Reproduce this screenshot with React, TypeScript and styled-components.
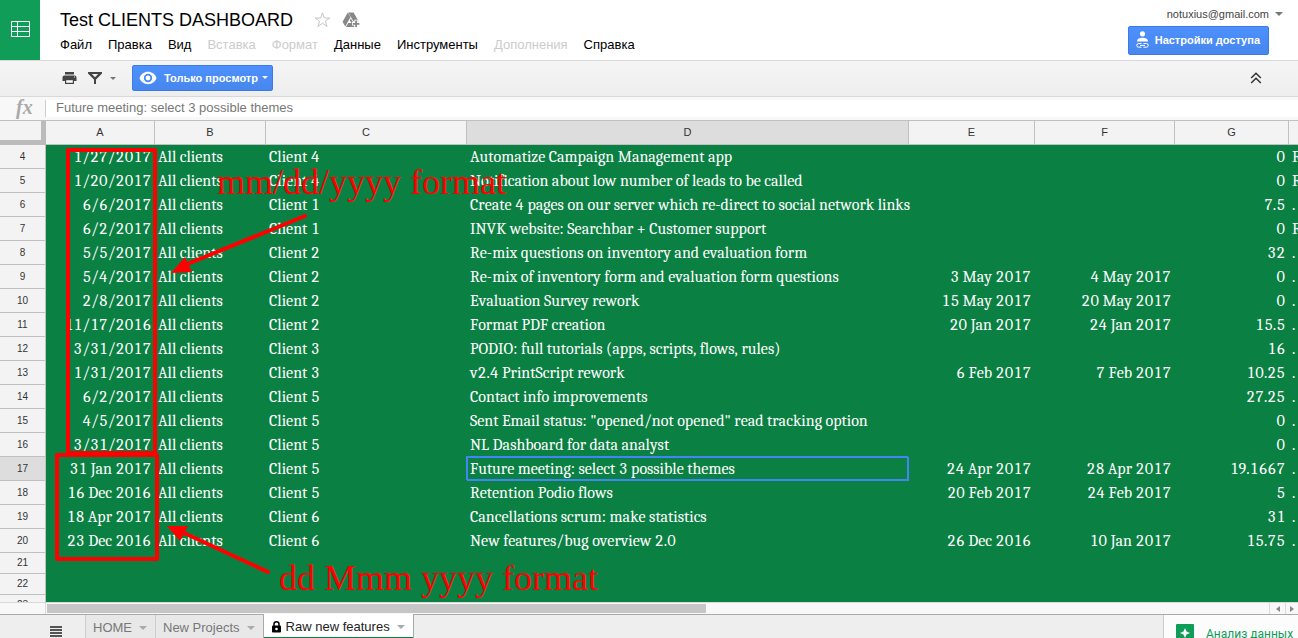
import React from "react";
import styled, { createGlobalStyle } from "styled-components";

const GlobalStyle = createGlobalStyle`
  *, *::before, *::after { box-sizing: border-box; }
  body {
    margin: 0;
    overflow: hidden;
    background: #fff;
    font-family: "Liberation Sans", Arial, sans-serif;
    color: #000;
  }
  button { font-family: inherit; cursor: pointer; }
`;

const Page = styled.div`
  display: flex;
  flex-direction: column;
  height: 100vh;
  min-height: 400px;
`;

const Header = styled.header`
  display: flex;
  flex: none;
  height: 61px;
  border-bottom: 1px solid #d9d9d9;
`;

const HomeLink = styled.a`
  display: flex;
  flex: none;
  width: 40px;
  height: 60px;
  align-items: center;
  justify-content: center;
  background: #0f9d58;
`;

const HeaderMain = styled.div`
  flex: 1;
  min-width: 0;
  padding: 8px 0 0 20px;
`;

const TitleRow = styled.div`
  display: flex;
  align-items: center;
  height: 24px;
`;

const Title = styled.h1`
  margin: 0 20px 0 0;
  font-size: 18px;
  line-height: 24px;
  font-weight: 400;
  white-space: nowrap;
`;

const IconButton = styled.button`
  display: flex;
  align-items: center;
  justify-content: center;
  padding: 0;
  border: 0;
  background: none;
`;

const TitleIcon = styled(IconButton)`
  width: 20px;
  height: 24px;
  margin-right: 8px;
`;

const Menu = styled.nav`
  display: flex;
  gap: 16px;
  padding-top: 5px;
`;

const MenuItem = styled.button`
  padding: 0;
  border: 0;
  background: none;
  font-size: 13px;
  line-height: 16px;
  color: #000;
  white-space: nowrap;
  &:disabled { color: #ccc; cursor: default; }
`;

const Account = styled.div`
  display: flex;
  flex-direction: column;
  align-items: flex-end;
  gap: 5px;
  padding: 7px 0 0;
`;

const AccountButton = styled.button`
  display: flex;
  align-items: center;
  gap: 6px;
  padding: 0;
  margin-right: 15px;
  border: 0;
  background: none;
  font-size: 11px;
  line-height: 14px;
  color: #444;
`;

const BlueButton = styled.button`
  display: flex;
  align-items: center;
  border: 1px solid #3b7be8;
  border-radius: 2px;
  background: linear-gradient(#4d90fe, #4787ed);
  color: #fff;
  font-size: 11px;
  line-height: 14px;
  font-weight: 700;
  white-space: nowrap;
`;

const ShareButton = styled(BlueButton)`
  height: 29px;
  margin-right: 29px;
  padding: 0 8px 2px 7px;
  gap: 6px;
`;

const ViewOnlyButton = styled(BlueButton)`
  height: 26px;
  margin-left: 16px;
  padding: 0 4px 1px 6px;
  gap: 7px;
`;

const Caret = styled.span<{ $size?: number; $color?: string }>`
  flex: none;
  width: 0;
  height: 0;
  border: ${(p) => p.$size ?? 4}px solid transparent;
  border-top-color: ${(p) => p.$color ?? "#777"};
  border-bottom: 0;
`;

const ButtonLabel = styled.span`
  display: flex;
  align-items: center;
  gap: 4px;
`;

const Toolbar = styled.div`
  display: flex;
  flex: none;
  align-items: center;
  height: 36px;
  padding: 0 36px 1px 62px;
  border-bottom: 1px solid #d9d9d9;
  background: linear-gradient(#f5f5f5, #eee);
`;

const ToolButton = styled(IconButton)`
  gap: 7px;
  margin-right: 10px;
  &:nth-child(2) { margin-right: 0; }
`;

const CollapseButton = styled(IconButton)`
  margin-left: auto;
`;

const FormulaBar = styled.div`
  display: flex;
  flex: none;
  align-items: center;
  height: 23px;
  background: #f8f8f8;
`;

const FormulaLabel = styled.label`
  flex: none;
  width: 46px;
  height: 17px;
  padding-left: 16px;
  border-right: 1px solid #ccc;
  font: italic 700 20px/15px "Liberation Serif", serif;
  color: #aaa;
`;

const FormulaInput = styled.input`
  flex: 1;
  min-width: 0;
  height: 17px;
  padding: 0 10px 2px;
  border: 0;
  outline: 0;
  background: #fff;
  font: 13px/15px "Liberation Sans", Arial, sans-serif;
  color: #777;
`;

const Sheet = styled.main`
  position: relative;
  flex: 1;
  min-height: 0;
  overflow: hidden;
  border-top: 1px solid #c0c0c0;
  background: #0b8043;
`;

const Grid = styled.table`
  width: 100%;
  table-layout: fixed;
  border-collapse: separate;
  border-spacing: 0;
`;

const Col = styled.col<{ $w?: number }>`
  width: ${(p) => (p.$w ? `${p.$w}px` : "auto")};
`;

const Corner = styled.td`
  height: 24px;
  padding: 0;
  border: solid #bbb;
  border-width: 0 5px 5px 0;
  background: #f3f3f3;
`;

const ColHead = styled.th<{ $active?: boolean }>`
  height: 24px;
  padding: 0 0 2px;
  border: solid #c0c0c0;
  border-width: 0 1px 1px 0;
  background: ${(p) => (p.$active ? "#ddd" : "#f3f3f3")};
  font-size: 11px;
  line-height: 14px;
  font-weight: 400;
  color: #333;
  &:last-child { border-right: 0; }
`;

const RowHead = styled(ColHead)<{ $short?: boolean }>`
  height: ${(p) => (p.$short ? 21 : 24)}px;
  padding: 0;
  font-size: 10px;
`;

const Cell = styled.td<{ $right?: boolean; $active?: boolean }>`
  padding: 0 4px 0 3px;
  box-shadow: ${(p) =>
    p.$active ? "-1px -1px #4285f4, inset 1px 1px #4285f4, inset -2px -2px #4285f4" : "none"};
  font-family: Cambria, Caladea, "Liberation Serif", serif;
  font-size: 16px;
  font-kerning: none;
  font-variant-numeric: lining-nums tabular-nums;
  line-height: 20px;
  color: #fff;
  text-align: ${(p) => (p.$right ? "right" : "left")};
  white-space: nowrap;
`;

const Annotations = styled.svg`
  position: absolute;
  top: 0;
  left: 0;
  width: 640px;
  height: 480px;
  pointer-events: none;
`;

const Note = styled.span<{ $x: number; $y: number }>`
  position: absolute;
  left: ${(p) => p.$x}px;
  top: ${(p) => p.$y}px;
  font: 36px/40px "Liberation Serif", serif;
  color: #f00;
  white-space: nowrap;
  pointer-events: none;
`;

const ScrollBar = styled.div`
  display: flex;
  flex: none;
  height: 12px;
  border-top: 1px solid #d9d9d9;
  background: #f8f8f8;
`;

const ScrollGutter = styled.div`
  flex: none;
  width: 46px;
  border-right: 1px solid #d9d9d9;
`;

const ScrollTrack = styled.div`
  flex: 1;
  padding: 1px;
`;

const ScrollThumb = styled.div`
  width: 54%;
  height: 9px;
  background: #c6c6c6;
`;

const ScrollArrow = styled(IconButton)`
  width: 16px;
  border-left: 1px solid #d9d9d9;
  &:last-child { width: 13px; }
`;

const BottomBar = styled.footer`
  display: flex;
  flex: none;
  align-items: stretch;
  height: 24px;
  border-top: 1px solid #aaa;
  background: #eee;
`;

const SheetList = styled(IconButton)`
  width: 85px;
  padding: 10px 0 0 27px;
`;

const Tab = styled.button<{ $active?: boolean }>`
  display: flex;
  align-items: center;
  gap: 7px;
  padding: 2px 8px 0 7px;
  margin-top: ${(p) => (p.$active ? -1 : 0)}px;
  border: solid ${(p) => (p.$active ? "#aaa" : "#ccc")};
  border-width: 0 ${(p) => (p.$active ? 1 : 0)}px 0 1px;
  background: ${(p) => (p.$active ? "#fff" : "#e8e8e8")};
  box-shadow: ${(p) => (p.$active ? "inset 0 -1px #0b8043" : "none")};
  font-size: 13px;
  line-height: 16px;
  color: ${(p) => (p.$active ? "#222" : "#777")};
  white-space: nowrap;
`;

const TabLabel = styled.span`
  display: flex;
  align-items: center;
  gap: 4px;
`;

const Explore = styled.button`
  display: flex;
  align-items: flex-start;
  gap: 12px;
  width: 135px;
  margin-left: auto;
  padding: 9px 0 0 12px;
  border: 0;
  border-left: 1px solid #ccc;
  background: #fcfcfc;
  overflow: hidden;
  color: #0f9d58;
  white-space: nowrap;
`;

const ExploreLabel = styled.span`
  font: 12px/20px Roboto, "Liberation Sans", sans-serif;
`;

const menus: { label: string; disabled?: boolean }[] = [
  { label: "Файл" },
  { label: "Правка" },
  { label: "Вид" },
  { label: "Вставка", disabled: true },
  { label: "Формат", disabled: true },
  { label: "Данные" },
  { label: "Инструменты" },
  { label: "Дополнения", disabled: true },
  { label: "Справка" },
];

const columns: { name: string; width?: number }[] = [
  { name: "A", width: 109 },
  { name: "B", width: 111 },
  { name: "C", width: 201 },
  { name: "D", width: 442 },
  { name: "E", width: 126 },
  { name: "F", width: 140 },
  { name: "G", width: 114 },
  { name: "" },
];

const rows: string[][] = [
  ["1/27/2017", "All clients", "Client 4", "Automatize Campaign Management app", "", "", "0", "R"],
  ["1/20/2017", "All clients", "Client 4", "Notification about low number of leads to be called", "", "", "0", "R"],
  ["6/6/2017", "All clients", "Client 1", "Create 4 pages on our server which re-direct to social network links", "", "", "7.5", "."],
  ["6/2/2017", "All clients", "Client 1", "INVK website: Searchbar + Customer support", "", "", "0", "R"],
  ["5/5/2017", "All clients", "Client 2", "Re-mix questions on inventory and evaluation form", "", "", "32", "."],
  ["5/4/2017", "All clients", "Client 2", "Re-mix of inventory form and evaluation form questions", "3 May 2017", "4 May 2017", "0", "."],
  ["2/8/2017", "All clients", "Client 2", "Evaluation Survey rework", "15 May 2017", "20 May 2017", "0", "."],
  ["11/17/2016", "All clients", "Client 2", "Format PDF creation", "20 Jan 2017", "24 Jan 2017", "15.5", "."],
  ["3/31/2017", "All clients", "Client 3", "PODIO: full tutorials (apps, scripts, flows, rules)", "", "", "16", "."],
  ["1/31/2017", "All clients", "Client 3", "v2.4 PrintScript rework", "6 Feb 2017", "7 Feb 2017", "10.25", "."],
  ["6/2/2017", "All clients", "Client 5", "Contact info improvements", "", "", "27.25", "."],
  ["4/5/2017", "All clients", "Client 5", 'Sent Email status: "opened/not opened" read tracking option', "", "", "0", "."],
  ["3/31/2017", "All clients", "Client 5", "NL Dashboard for data analyst", "", "", "0", "."],
  ["31 Jan 2017", "All clients", "Client 5", "Future meeting: select 3 possible themes", "24 Apr 2017", "28 Apr 2017", "19.1667", "."],
  ["16 Dec 2016", "All clients", "Client 5", "Retention Podio flows", "20 Feb 2017", "24 Feb 2017", "5", "."],
  ["18 Apr 2017", "All clients", "Client 6", "Cancellations scrum: make statistics", "", "", "31", "."],
  ["23 Dec 2016", "All clients", "Client 6", "New features/bug overview 2.0", "26 Dec 2016", "10 Jan 2017", "15.75", "."],
  [],
  [],
  [],
];

const FIRST_ROW = 4;
const ACTIVE_ROW = 17;
const ACTIVE_COL = 3;
const isRight = (c: number) => c === 0 || (c >= 4 && c <= 6);

export default function App() {
  return (
    <Page>
      <GlobalStyle />
      <Header>
        <HomeLink href="#" aria-label="Sheets home">
          <svg width="20" height="18" viewBox="0 0 20 18" fill="none" stroke="#fff">
            <path d="M1.5 .5h18v15h-18zM1.5 5.5h18M1.5 10.5h18M7.5 .5v15" />
          </svg>
        </HomeLink>
        <HeaderMain>
          <TitleRow>
            <Title>Test CLIENTS DASHBOARD</Title>
            <TitleIcon aria-label="Star">
              <svg width="17" height="18" viewBox="0 0 17 18" fill="none" stroke="#c4c4c4">
                <path d="M7.500 1.800l1.800 5.200h5.500l-4.400 3.200 1.700 5.300-4.600-3.300-4.600 3.300 1.700-5.300L.2 7h5.500z" />
              </svg>
            </TitleIcon>
            <TitleIcon aria-label="Add to Drive">
              <svg width="18" height="16" viewBox="0 0 18 16" fill="#888">
                <path d="M5.800 .4L.6 9.800l2.600 4.800L8.600 5z" />
                <path d="M6.200 .4h5.400l5 8.800H11.400z" />
                <path d="M8.800 6.500l2.600 4.300 1 4.200H3.900l2.300-4h3.300L7.800 8.200z" />
                <path
                  d="M13.200 8.500h1.800v2.400h2.400v1.800H15V15h-1.800v-2.300h-2.400v-1.800h2.400z"
                  stroke="#fff"
                  strokeWidth="1.600"
                  paintOrder="stroke"
                />
              </svg>
            </TitleIcon>
          </TitleRow>
          <Menu>
            {menus.map((m) => (
              <MenuItem key={m.label} disabled={m.disabled}>{m.label}</MenuItem>
            ))}
          </Menu>
        </HeaderMain>
        <Account>
          <AccountButton>
            notuxius@gmail.com
            <Caret />
          </AccountButton>
          <ShareButton>
            <svg width="13" height="18" viewBox="0 0 13 18" fill="#fff">
              <circle cx="6.500" cy="2.800" r="2.600" />
              <path d="M1 10.500C1 7.800 4 6.800 6.500 6.800s5.500 1 5.500 3.700z" />
              <path
                d="M5.500 12.500H2.600a1.800 1.800 0 0 0 0 3.700h2.900M7.500 12.500h2.900a1.800 1.800 0 0 1 0 3.700H7.500M4 14.400h5"
                fill="none"
                stroke="#fff"
              />
            </svg>
            Настройки доступа
          </ShareButton>
        </Account>
      </Header>

      <Toolbar>
        <ToolButton aria-label="Print">
          <svg width="15" height="14" viewBox="0 0 15 14" fill="#444">
            <path d="M3 1h9v2.500H3z" />
            <path d="M2.500 4.500h10q2 0 2 2V10H12V8H3v2H.500V6.500q0-2 2-2z" />
            <path d="M3.600 8.600h7.800v3.800H3.600z" fill="#fff" stroke="#444" strokeWidth="1.200" />
            <path d="M12 5.500h1v1h-1z" fill="#eee" />
          </svg>
        </ToolButton>
        <ToolButton aria-label="Filter">
          <svg width="16" height="14" viewBox="0 0 16 14">
            <path d="M1 1h14v1.500L9 8.500V13H7V8.500L1 2.500z" fill="#444" />
            <path d="M4.800 3h6.400L8 6.300z" fill="#f2f2f2" />
          </svg>
          <Caret $size={3} />
        </ToolButton>
        <ViewOnlyButton>
          <svg width="18" height="14" viewBox="0 0 18 14">
            <path d="M.5 7C2 3 5.200.8 9 .8S16 3 17.500 7C16 11 12.800 13.200 9 13.200S2 11 .5 7z" fill="#fff" />
            <circle cx="9" cy="7" r="4.200" fill="#4a8af4" />
            <circle cx="9" cy="7" r="2.400" fill="#fff" />
          </svg>
          <ButtonLabel>
            Только просмотр
            <Caret $size={3} $color="#fff" />
          </ButtonLabel>
        </ViewOnlyButton>
        <CollapseButton aria-label="Collapse">
          <svg width="12" height="12" viewBox="0 0 12 12" fill="none" stroke="#333" strokeWidth="1.500">
            <path d="M1.200 6L6 1.200 10.800 6M1.200 11L6 6.200 10.800 11" />
          </svg>
        </CollapseButton>
      </Toolbar>

      <FormulaBar>
        <FormulaLabel htmlFor="formula">fx</FormulaLabel>
        <FormulaInput id="formula" readOnly value="Future meeting: select 3 possible themes" />
      </FormulaBar>

      <Sheet>
        <Grid>
          <colgroup>
            <Col $w={46} />
            {columns.map((c) => <Col key={c.name} $w={c.width} />)}
          </colgroup>
          <thead>
            <tr>
              <Corner />
              {columns.map((c, i) => (
                <ColHead key={c.name} $active={i === ACTIVE_COL}>{c.name}</ColHead>
              ))}
            </tr>
          </thead>
          <tbody>
            {rows.map((row, r) => {
              const n = FIRST_ROW + r;
              return (
                <tr key={n}>
                  <RowHead scope="row" $active={n === ACTIVE_ROW} $short={!row.length}>{n}</RowHead>
                  {columns.map((c, i) => (
                    <Cell key={c.name} $right={isRight(i)} $active={n === ACTIVE_ROW && i === ACTIVE_COL}>
                      {row[i]}
                    </Cell>
                  ))}
                </tr>
              );
            })}
          </tbody>
        </Grid>
        <Annotations
          viewBox="0 0 640 480"
          fill="none"
          stroke="#f00"
          strokeWidth="4"
          strokeLinejoin="round"
          strokeLinecap="round"
        >
          <path d="M68 29h87v303H68z" />
          <path d="M57 334h100v104H57z" />
          <path d="M305 95L185 144M268 451L182 411" />
          <path d="M171 152l14-16 7 15zM167 405h21l-8 15z" fill="#f00" stroke="none" />
        </Annotations>
        <Note $x={217} $y={41}>mm/dd/yyyy format</Note>
        <Note $x={279} $y={437}>dd Mmm yyyy format</Note>
      </Sheet>

      <ScrollBar>
        <ScrollGutter />
        <ScrollTrack><ScrollThumb /></ScrollTrack>
        <ScrollArrow aria-label="Scroll left">
          <svg width="4" height="6" viewBox="0 0 4 6" fill="#888"><path d="M4 0v6L0 3z" /></svg>
        </ScrollArrow>
        <ScrollArrow aria-label="Scroll right">
          <svg width="4" height="6" viewBox="0 0 4 6" fill="#888"><path d="M0 0v6l4-3z" /></svg>
        </ScrollArrow>
      </ScrollBar>

      <BottomBar>
        <SheetList aria-label="All sheets">
          <svg width="12" height="11" viewBox="0 0 12 11" fill="#555">
            <path d="M0 0h12v2H0zM0 3h12v2H0zM0 6h12v2H0zM0 9h12v2H0z" />
          </svg>
        </SheetList>
        <Tab>HOME<Caret $color="#aaa" /></Tab>
        <Tab>New Projects<Caret $color="#aaa" /></Tab>
        <Tab $active>
          <TabLabel>
            <svg width="11" height="12" viewBox="0 0 11 12">
              <path d="M3 5V3.300a2.500 2.500 0 0 1 5 0V5" fill="none" stroke="#000" strokeWidth="1.500" />
              <rect x="1" y="4.500" width="9" height="7" rx="1" fill="#000" />
              <circle cx="5.500" cy="8" r="1.300" fill="#fff" />
            </svg>
            Raw new features
          </TabLabel>
          <Caret $color="#aaa" />
        </Tab>
        <Explore>
          <svg width="18" height="18" viewBox="0 0 18 18">
            <rect width="18" height="18" rx="1" fill="#0f9d58" />
            <path d="M9 4l1.500 3.500L14 9l-3.500 1.500L9 14l-1.500-3.500L4 9l3.500-1.500z" fill="#fff" />
          </svg>
          <ExploreLabel>Анализ данных</ExploreLabel>
        </Explore>
      </BottomBar>
    </Page>
  );
}
